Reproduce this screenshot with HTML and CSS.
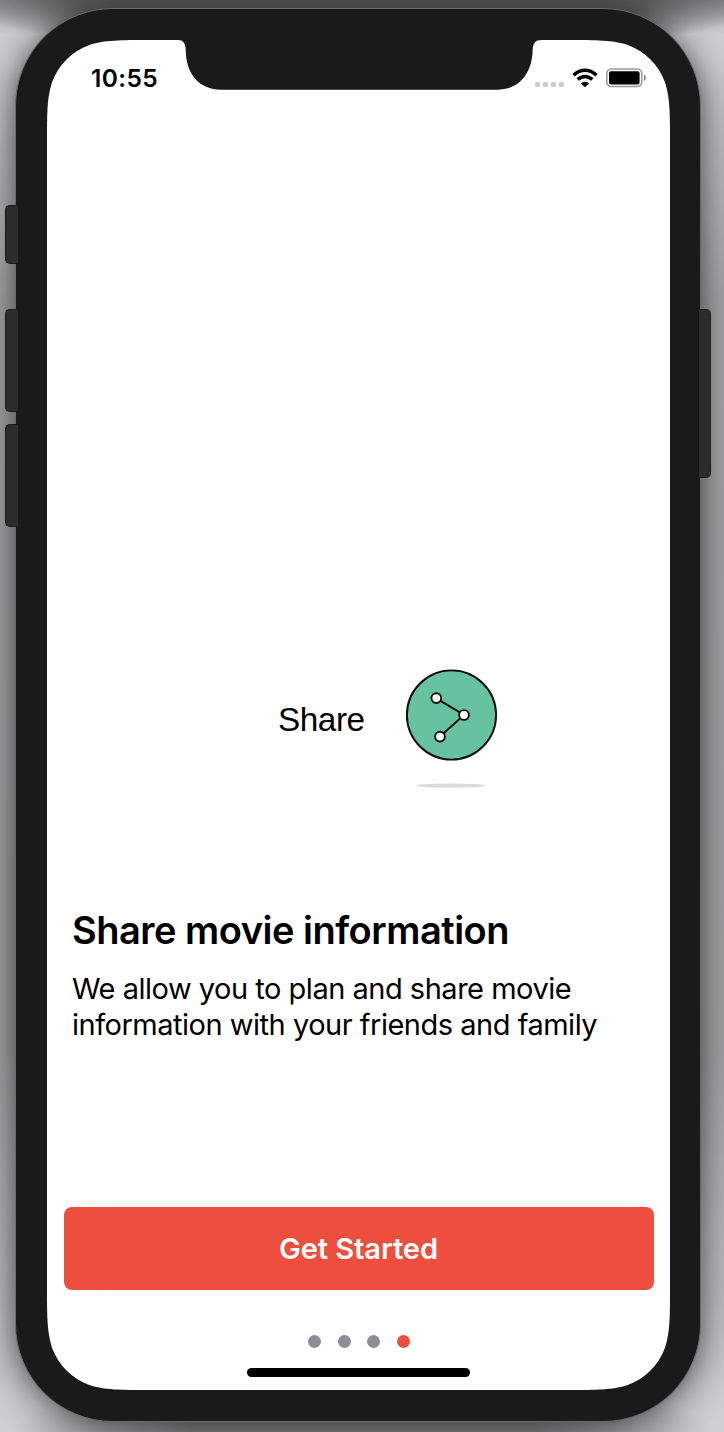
FILE: index.html
```
<!DOCTYPE html>
<html lang="en">
<head>
<meta charset="utf-8">
<title>Share movie information</title>
<link rel="stylesheet" href="styles.css">
</head>
<body>
<div class="stage">
  <div class="phone">
    <span class="key key-mute"></span>
    <span class="key key-up"></span>
    <span class="key key-down"></span>
    <span class="key key-power"></span>
    <main class="screen">
      <svg class="notch" width="370" height="50" viewBox="0 0 370 50"><path d="M0 0H4C9 0 11.500 3 11.700 10C11.900 34 25 49.700 47 49.700H323C345 49.700 358 34 358.700 10C359 3 361 0 368 0Z" fill="#1a1a1a"/></svg>
      <header class="status">
        <span class="time">10:55</span>
        <div class="indicators">
          <span class="cell"><i></i><i></i><i></i><i></i></span>
          <svg class="wifi" width="26" height="20" viewBox="0 0 26 20">
            <g fill="none" stroke="#000" stroke-width="3.500"><path d="M1.500 7.200Q7 2.300 13 2.300T24.500 7.200"/><path d="M5.700 11.600Q9 8.400 13 8.400T20.300 11.600"/></g>
            <path d="M8.800 15.500Q13 11.800 17.200 15.500L13 19.200Z"/>
          </svg>
          <svg class="battery" width="40" height="20" viewBox="0 0 40 20">
            <rect x="0.800" y="1" width="35" height="17.600" rx="4.500" fill="none" stroke="#999" stroke-width="1.500"/>
            <rect x="3" y="3.200" width="30.600" height="13.200" rx="2"/>
            <path d="M38 6.500Q40 7.500 40 9.800T38 13Z" fill="#888"/>
          </svg>
        </div>
      </header>
      <section class="art">
        <span class="art-label">Share</span>
        <svg class="art-icon" width="94" height="124" viewBox="0 0 94 124">
          <circle cx="46.500" cy="47" r="44.600" fill="#66c2a0" stroke="#0b0b0b" stroke-width="1.900"/>
          <path d="M31.300 30.300L59 47L35 68.500" fill="none" stroke="#0b0b0b" stroke-width="2"/>
          <g fill="#fff" stroke="#0b0b0b" stroke-width="1.900"><circle cx="31.300" cy="30.100" r="4.900"/><circle cx="59" cy="47" r="4.900"/><circle cx="35" cy="68.600" r="4.900"/></g>
          <ellipse cx="46" cy="117.600" rx="34.500" ry="2.100" fill="#dcdcdc"/>
        </svg>
      </section>
      <section class="copy">
        <h1>Share movie information</h1>
        <p>We allow you to plan and share movie<br>information with your friends and family</p>
      </section>
      <button class="cta">Get Started</button>
      <nav class="dots"><i></i><i></i><i></i><i class="on"></i></nav>
      <div class="home"></div>
    </main>
  </div>
</div>
</body>
</html>
```
FILE: styles.css
```
* { box-sizing: border-box; }
body { margin: 0; font-family: Inter, sans-serif; color: #000; }
.stage {
  width: 724px; height: 1432px; overflow: hidden; padding: 8px 0 0 15px;
  background:
    radial-gradient(ellipse 400px 60px at 362px 0, rgba(60,60,60,.6) 70%, transparent 100%),
    linear-gradient(rgba(70,70,70,.5), transparent 34px),
    radial-gradient(ellipse 350px 60px at 362px 1432px, rgba(70,70,70,.5) 50%, transparent 100%),
    linear-gradient(transparent 60px, rgba(110,112,110,.38) 300px, rgba(110,112,110,.4) 1050px, transparent 1390px),
    #cfd1d3;
}
.phone {
  position: relative; width: 686px; height: 1414px; padding: 31px 30px 31px 31px;
  border: 1px solid #6c6c6c; border-radius: 98px; background: #1a1a1a;
  box-shadow: 0 6px 46px rgba(0,0,0,.6), 0 0 14px rgba(0,0,0,.15);
}
.key { position: absolute; width: 13px; left: -11px; background: #2c2c2c; border: 1px solid #1b1b1b; border-right: 0; border-radius: 5px 0 0 5px; }
.key-mute { top: 196px; height: 59px; }
.key-up { top: 300px; height: 103px; }
.key-down { top: 415px; height: 103px; }
.key-power { left: auto; right: -11px; width: 12px; top: 300px; height: 169px; border: 1px solid #1b1b1b; border-left: 0; border-radius: 0 5px 5px 0; }
.screen {
  position: relative; display: flex; flex-direction: column; width: 623px; height: 1350px; background: #fff;
  clip-path: path("M102.400 0H520.600C550.100 0 564.800 0 580.700 5C598 11.300 611.700 25 618 42.300C623 58.200 623 72.900 623 102.400V1247.600C623 1277.100 623 1291.800 618 1307.700C611.700 1325 598 1338.700 580.700 1345C564.800 1350 550.100 1350 520.600 1350H102.400C72.900 1350 58.200 1350 42.300 1345C25 1338.700 11.300 1325 5 1307.700C0 1291.800 0 1277.100 0 1247.600V102.400C0 72.900 0 58.200 5 42.300C11.300 25 25 11.300 42.300 5C58.200 0 72.900 0 102.400 0Z");
}
.notch { position: absolute; top: 0; left: 127px; }
.status { display: flex; justify-content: space-between; align-items: flex-start; height: 100px; padding: 23px 24px 0 44px; }
.time { font-size: 24.500px; line-height: 30px; font-weight: 600; letter-spacing: .4px; }
.indicators { display: flex; padding-top: 5px; }
.cell { display: flex; gap: 3px; padding-top: 14px; margin-right: 8px; }
.cell i { width: 5px; height: 5px; border-radius: 1.5px; background: #ccc; }
.wifi { margin-right: 8px; }
.art { display: flex; height: 124px; margin: 528px 0 0 231px; }
.art-label { width: 127px; padding-top: 32px; font: 33.3px/40px "Liberation Sans", Arial, sans-serif; letter-spacing: -.45px; }
.copy { margin: 115px 0 0 25px; white-space: nowrap; }
h1 { margin: 0; font-size: 38px; line-height: 46px; font-weight: 600; letter-spacing: -.5px; }
p { margin: 18px 0 0; font-size: 29px; line-height: 36px; letter-spacing: -.49px; }
.cta { width: 590px; height: 83px; margin: 164px 0 0 16.500px; border: 0; border-radius: 8px; background: #ee4e3e; color: #fff; font: 600 29px/36px Inter, sans-serif; letter-spacing: -.05px; }
.dots { display: flex; justify-content: center; gap: 16.400px; margin: 44.500px 0 0 1px; }
.dots i { width: 13px; height: 13px; border-radius: 50%; background: #8e8d93; }
.dots .on { background: #ee4e3e; }
.home { width: 223px; height: 9px; margin: 20.500px 0 0 200px; border-radius: 5px; background: #000; }
```
